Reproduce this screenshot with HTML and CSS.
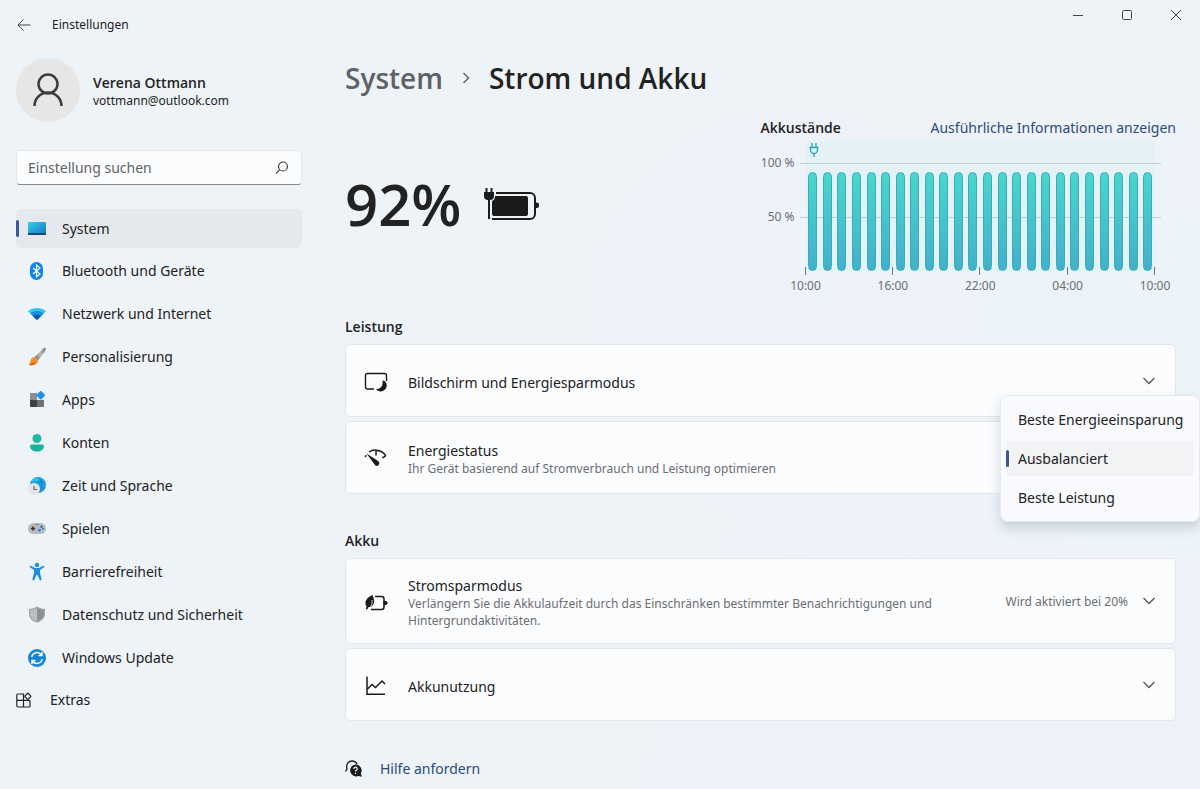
FILE: index.html
```html
<!DOCTYPE html>
<html lang="de">
<head>
  <meta charset="UTF-8" />
  <meta name="viewport" content="width=device-width, initial-scale=1.0"/>
  <title>Einstellungen</title>
  <link rel="stylesheet" href="styles.css">
</head>
<body>

  <header class="titlebar">
    <button class="back" aria-label="Zurück">
      <svg width="14" height="14" viewBox="0 0 14 14"><path d="M13.500 7H1M6.500 1.500L1 7l5.500 5.500"/></svg>
    </button>
    <span class="app-name">Einstellungen</span>
    <div class="window-controls">
      <button aria-label="Minimieren"><svg width="12" height="12" viewBox="0 0 12 12"><path d="M1 6.500h10"/></svg></button>
      <button aria-label="Maximieren"><svg width="12" height="12" viewBox="0 0 12 12"><rect x="1.500" y="1.500" width="9" height="9" rx="1"/></svg></button>
      <button aria-label="Schließen"><svg width="12" height="12" viewBox="0 0 12 12"><path d="M1 1l10 10M11 1L1 11"/></svg></button>
    </div>
  </header>

  <div class="layout">
    <aside class="sidebar">
      <div class="profile">
        <div class="avatar">
          <svg width="30" height="34" viewBox="0 0 30 34"><circle cx="15" cy="11" r="9.500"/><path d="M1.500 33a13.500 13.500 0 0 1 27 0"/></svg>
        </div>
        <div class="user">
          <div class="name">Verena Ottmann</div>
          <div class="mail">vottmann@outlook.com</div>
        </div>
      </div>

      <form class="search">
        <input type="search" placeholder="Einstellung suchen" aria-label="Einstellung suchen">
        <svg width="14" height="14" viewBox="0 0 14 14"><circle cx="8" cy="5.500" r="4.500"/><path d="M4.800 8.700L1 12.500"/></svg>
      </form>

      <nav class="nav">
        <a class="nav-item active" href="#">
          <svg width="20" height="20" viewBox="0 0 20 20">
            <defs><linearGradient id="sys" x1="0" y1="0" x2="1" y2="1"><stop offset="0" stop-color="#38d0e4"/><stop offset="1" stop-color="#1374c8"/></linearGradient></defs>
            <rect x="1" y="3" width="18" height="13" rx="1" fill="url(#sys)"/><path d="M1 14h18v1a1 1 0 0 1-1 1H2a1 1 0 0 1-1-1z" fill="#0d4a7c"/>
          </svg>
          System
        </a>
        <a class="nav-item" href="#">
          <svg width="20" height="20" viewBox="0 0 20 20">
            <rect x="3" y="1" width="13" height="18" rx="6.500" fill="#0a84f5"/><path d="M6 7l7 6-3.500 3V4L13 7l-7 6" fill="none" stroke="#fff" stroke-width="1.200"/>
          </svg>
          Bluetooth und Geräte
        </a>
        <a class="nav-item" href="#">
          <svg width="20" height="20" viewBox="0 0 20 20">
            <path d="M1 7.200C6 2.800 14 2.800 19 7.200L10 16z" fill="#38c3f0"/><path d="M3.300 9.400c4-3.200 9.400-3.200 13.400 0L10 16z" fill="#1690dc"/><path d="M5.800 11.900c2.600-2 5.800-2 8.400 0L10 16z" fill="#0b5cad"/>
          </svg>
          Netzwerk und Internet
        </a>
        <a class="nav-item" href="#">
          <svg width="20" height="20" viewBox="0 0 20 20">
            <defs><linearGradient id="brush" x1="1" y1="0" x2="0" y2="1"><stop offset="0" stop-color="#777"/><stop offset=".5" stop-color="#bbb"/><stop offset="1" stop-color="#666"/></linearGradient></defs>
            <path d="M18.500 1.200c.8.800.2 2-.6 3.200l-7 9.100-3.600-3.300 8.200-8c1-1 2.200-1.800 3-1z" fill="url(#brush)"/><path d="M7 10l4 3.700c-.3 3.300-4 5.300-9.500 4.300 1.700-1 1.500-2.300 2-4.200C4 12 5 10.500 7 10z" fill="#f58a1f"/><path d="M2 18.100c3 .4 5-.2 6.500-1.800-2-.2-3.500-.5-5 .4z" fill="#dd5a0c"/>
          </svg>
          Personalisierung
        </a>
        <a class="nav-item" href="#">
          <svg width="20" height="20" viewBox="0 0 20 20">
            <path d="M3 3h7v7H3z" fill="#8b8d92"/><path d="M3 10h7v7H4a1 1 0 0 1-1-1z" fill="#3e4044"/><path d="M10 10h7v6a1 1 0 0 1-1 1h-6z" fill="#6e7075"/><rect x="10.500" y="2" width="6.500" height="6.500" rx="1" transform="rotate(45 13.750 5.250)" fill="#1e90ea"/>
          </svg>
          Apps
        </a>
        <a class="nav-item" href="#">
          <svg width="20" height="20" viewBox="0 0 20 20">
            <circle cx="10" cy="5.500" r="4.500" fill="#20b8a6"/><path d="M4.500 11.500h11A1.500 1.500 0 0 1 17 13c0 3.500-3 5.500-7 5.500S3 16.500 3 13a1.500 1.500 0 0 1 1.500-1.500z" fill="#19b39d"/>
          </svg>
          Konten
        </a>
        <a class="nav-item" href="#">
          <svg width="20" height="20" viewBox="0 0 20 20">
            <circle cx="11" cy="9" r="8" fill="#1d9fdf"/><path d="M4 5.500C6 2 10 .5 13 1.400L10 6l-3 1z" fill="#38c8ec"/><path d="M4 6h14.500M3.500 12H18M11 1c-5 5-5 11 0 16M11 1c5 5 5 11 0 16" fill="none" stroke="#0d6fbc" stroke-width=".5"/><circle cx="7" cy="13" r="6" fill="#e4e4e6"/><path d="M7 9.800V13.500h3" fill="none" stroke="#666" stroke-width="1.200"/>
          </svg>
          Zeit und Sprache
        </a>
        <a class="nav-item" href="#">
          <svg width="20" height="20" viewBox="0 0 20 20">
            <rect x="1" y="4" width="18" height="11" rx="5.500" fill="#b9bbc0"/><path d="M3.800 9.500h4.400M6 7.300v4.400" stroke="#333" stroke-width="1.400"/><path d="M8.500 5.500h3" stroke="#777"/><circle cx="14.500" cy="7.800" r="1.300" fill="#1583d5"/><circle cx="12.500" cy="11.300" r="1.300" fill="#1583d5"/><circle cx="16" cy="9.700" r="1" fill="#1583d5"/>
          </svg>
          Spielen
        </a>
        <a class="nav-item" href="#">
          <svg width="20" height="20" viewBox="0 0 20 20">
            <circle cx="10" cy="3" r="2.200" fill="#1b8fe2"/><path d="M3.800 3.800L8 6h4l4.200-2.200c1-.3 1.500 1 .6 1.600L13 8v3l1.600 6.300c.1 1.200-1.400 1.500-1.900.5L10.500 13h-1l-2.200 4.800c-.5 1-2 .7-1.900-.5L7 11V8L3.200 5.400c-.9-.6-.4-1.900.6-1.600z" fill="#1b8fe2"/>
          </svg>
          Barrierefreiheit
        </a>
        <a class="nav-item" href="#">
          <svg width="20" height="20" viewBox="0 0 20 20">
            <path d="M10 1.500c2.500 1.700 5 2.200 8 2.500v5c0 4-3 6.800-8 8.800-5-2-8-4.800-8-8.800V4c3-.3 5.500-.8 8-2.500z" fill="#a3a5a8"/><path d="M10 3v13.200c4-1.800 6.700-4 6.700-7.200V5.200C14.200 5 12 4.300 10 3z" fill="#8d8f92"/><path d="M10 3v13.200C6 14.400 3.300 12.200 3.300 9V5.200C5.800 5 8 4.300 10 3z" fill="#bcbec0"/>
          </svg>
          Datenschutz und Sicherheit
        </a>
        <a class="nav-item" href="#">
          <svg width="20" height="20" viewBox="0 0 20 20">
            <circle cx="10" cy="10" r="9" fill="#1486d8"/><path d="M4.800 9a5.300 5.300 0 0 1 9.700-2M15.200 11a5.300 5.300 0 0 1-9.700 2M15 4v3.500h-3.500M5 16v-3.500h3.500" fill="none" stroke="#fff" stroke-width="1.500"/>
          </svg>
          Windows Update
        </a>
        <a class="nav-item extra" href="#">
          <svg width="16" height="16" viewBox="0 0 16 16">
            <path d="M8 2H2A1.300 1.300 0 0 0 .8 3.300v10.400A1.300 1.300 0 0 0 2 15h10.700a1.300 1.300 0 0 0 1.300-1.300V8.500M7.500 2v13M.8 8.300H14" fill="none" stroke="#222" stroke-width="1.200"/><rect x="9.500" y="2" width="4.600" height="4.600" rx=".6" transform="rotate(45 11.800 4.300)" fill="none" stroke="#222" stroke-width="1.200"/>
          </svg>
          Extras
        </a>
      </nav>
    </aside>

    <main class="content">
      <h1 class="breadcrumb">
        <a href="#">System</a>
        <svg width="8" height="12" viewBox="0 0 8 12"><path d="M1.500 1l5 5-5 5"/></svg>
        <span>Strom und Akku</span>
      </h1>

      <section class="overview">
        <div class="level">
          <span>92%</span>
          <svg width="56" height="34" viewBox="0 0 56 34">
            <path d="M12 6h34a5 5 0 0 1 5 5v16a5 5 0 0 1-5 5H8" fill="none" stroke="#1b1b1b" stroke-width="2"/>
            <path d="M11 9h31a2 2 0 0 1 2 2v16a2 2 0 0 1-2 2H10a2 2 0 0 1-2-2V14q3-1 3-5z" fill="#1b1b1b"/>
            <path d="M51 15.500h2a2 2 0 0 1 2 2v1.500a2 2 0 0 1-2 2h-2z" fill="#1b1b1b"/>
            <path d="M0 5h10v4a4 4 0 0 1-4 4H4a4 4 0 0 1-4-4z" fill="#1b1b1b"/>
            <path d="M2.500 1v5M7.500 1v5M5 12v20" fill="none" stroke="#1b1b1b" stroke-width="2"/>
          </svg>
        </div>

        <div class="chart">
          <div class="chart-head">
            <h2>Akkustände</h2>
            <a href="#">Ausführliche Informationen anzeigen</a>
          </div>
          <div class="chart-body">
            <div class="y-axis"><span>100 %</span><span>50 %</span></div>
            <div class="plot">
              <svg class="plug" width="10" height="14" viewBox="0 0 10 14"><path d="M3 0v4M7 0v4M.5 4.500h9M1.500 4.500V7a3.500 3.500 0 0 0 7 0V4.500M5 10.500V14"/></svg>
              <div class="bars" id="bars"></div>
            </div>
          </div>
          <div class="x-axis"><span>10:00</span><span>16:00</span><span>22:00</span><span>04:00</span><span>10:00</span></div>
        </div>
      </section>

      <section class="group">
        <h2>Leistung</h2>
        <button class="card">
          <svg class="icon" width="24" height="24" viewBox="0 0 24 24"><path d="M10 19H3.500a2 2 0 0 1-2-2V5.500a2 2 0 0 1 2-2h17a2 2 0 0 1 2 2V11" fill="none" stroke="#1b1b1b" stroke-width="1.400"/><path d="M18.500 10.500c4.500.5 5 5 3.500 7.800-2 3.700-7.200 4.200-10 1 4.800-.3 7.300-3.600 6.500-8.800z" fill="#1b1b1b"/></svg>
          <span class="text"><span class="title">Bildschirm und Energiesparmodus</span></span>
          <svg class="chevron" width="14" height="8" viewBox="0 0 14 8"><path d="M1.500 1L7 6.500 12.500 1"/></svg>
        </button>
        <div class="card">
          <svg class="icon" width="24" height="24" viewBox="0 0 24 24"><path d="M5 5C10 1.500 18.500 3 21.800 9M12 3.500v5M21.800 8.800l-3.500 2M2.300 8.300l-1.200 1.600" fill="none" stroke="#1b1b1b" stroke-width="1.500"/><path d="M2.500 6.500l12 7.700a2.700 2.700 0 0 1-3.200 4.300z" fill="#1b1b1b"/></svg>
          <span class="text">
            <span class="title">Energiestatus</span>
            <span class="sub">Ihr Gerät basierend auf Stromverbrauch und Leistung optimieren</span>
          </span>
          <div class="menu" role="listbox" aria-label="Energiestatus">
            <button role="option" aria-selected="false">Beste Energieeinsparung</button>
            <button role="option" aria-selected="true" class="selected">Ausbalanciert</button>
            <button role="option" aria-selected="false">Beste Leistung</button>
          </div>
        </div>
      </section>

      <section class="group">
        <h2>Akku</h2>
        <button class="card tall">
          <svg class="icon" width="24" height="24" viewBox="0 0 24 24"><path d="M11 5.500h6.500a2.500 2.500 0 0 1 2.500 2.500v8a2.500 2.500 0 0 1-2.500 2.500H7" fill="none" stroke="#1b1b1b" stroke-width="1.500"/><path d="M20 10l3 1v2l-3 1z" fill="#1b1b1b" stroke="#1b1b1b"/><path d="M8.500 4c-4 2-7.500 4.500-7 9 .1 1 .4 1.700 1 2.300L1.800 18l1.500.6 1-2.400c4 0 6.500-3.500 5.700-7.500C9.700 7 9 5.500 8.500 4z" fill="#1b1b1b"/><path d="M6.500 15.500c1.500-2 2-4 1.500-6.500" stroke="#fff" stroke-width=".8" fill="none"/></svg>
          <span class="text">
            <span class="title">Stromsparmodus</span>
            <span class="sub">Verlängern Sie die Akkulaufzeit durch das Einschränken bestimmter Benachrichtigungen und Hintergrundaktivitäten.</span>
          </span>
          <span class="value">Wird aktiviert bei 20%</span>
          <svg class="chevron" width="14" height="8" viewBox="0 0 14 8"><path d="M1.500 1L7 6.500 12.500 1"/></svg>
        </button>
        <button class="card">
          <svg class="icon" width="24" height="24" viewBox="0 0 24 24"><path d="M3 2.500v17.700h18M3.500 15L8 10.500l3.500 3L18 7l3 3" fill="none" stroke="#1b1b1b" stroke-width="1.500"/></svg>
          <span class="text"><span class="title">Akkunutzung</span></span>
          <svg class="chevron" width="14" height="8" viewBox="0 0 14 8"><path d="M1.500 1L7 6.500 12.500 1"/></svg>
        </button>
      </section>

      <a class="help" href="#">
        <svg width="18" height="18" viewBox="0 0 18 18"><path d="M.5 11.500l1.500-2.500C.8 4.500 3 1 6.800 1c2.600 0 4.500 1.300 5.300 3.200" fill="none" stroke="#1b1b1b" stroke-width="1.300"/><path d="M10.500 4.500a6 6 0 0 1 5.300 9l1.200 3.300-3.500-.8a6 6 0 1 1-3-11.500z" fill="#1b1b1b"/><path d="M8.800 9a1.700 1.700 0 1 1 2.600 1.300c-.6.400-.9.600-.9 1.300M10.500 12.700v1.300" fill="none" stroke="#fff" stroke-width="1.200"/></svg>
        Hilfe anfordern
      </a>
    </main>
  </div>

  <script>
    // battery level in percent, one value per hour
    const levels = new Array(24).fill(92);
    const bars = document.getElementById('bars');

    levels.forEach(level => {
      const bar = document.createElement('span');
      bar.style.height = level + '%';
      bars.appendChild(bar);
    });
  </script>

</body>
</html>
```
FILE: styles.css
```css
*, *::before {
  box-sizing: border-box;
}

body {
  margin: 0;
  min-height: 100vh;
  font-family: "Noto Sans", "Open Sans", sans-serif;
  font-size: 14px;
  line-height: 20px;
  color: #222;
  background:
    radial-gradient(circle at 66% 40%, #eef2fa 0, rgba(238, 242, 250, 0) 24%),
    radial-gradient(circle at 90% 100%, #eef2fa 0, rgba(238, 242, 250, 0) 35%),
    radial-gradient(circle at 96% 60%, #ebf4f8 0, rgba(235, 244, 248, 0) 30%),
    #eef3f8;
}

h1, h2 {
  margin: 0;
}

a {
  color: #2c4a7c;
  text-decoration: none;
}

button {
  font: inherit;
  color: inherit;
  border: none;
  background: none;
  padding: 0;
}

svg {
  flex: none;
}

/* title bar */
.titlebar {
  display: flex;
  align-items: center;
  height: 50px;
  padding-left: 16px;
  font-size: 12px;
}

.back {
  display: flex;
  justify-content: center;
  width: 16px;
}

.back svg, .window-controls svg {
  fill: none;
  stroke: #444;
}

.app-name {
  margin-left: 20px;
}

.window-controls {
  display: flex;
  align-self: flex-start;
  margin-left: auto;
}

.window-controls button {
  display: flex;
  align-items: center;
  justify-content: center;
  width: 49px;
  height: 30px;
}

.layout {
  display: flex;
  padding: 8px 24px 0 16px;
}

/* sidebar */
.sidebar {
  flex: none;
  width: 286px;
  margin-right: 43px;
}

.profile {
  display: flex;
  align-items: center;
  gap: 13px;
}

.avatar {
  display: flex;
  align-items: center;
  justify-content: center;
  width: 64px;
  height: 64px;
  border-radius: 50%;
  background: #e6e6e6;
}

.avatar svg {
  fill: none;
  stroke: #3c3c3c;
  stroke-width: 2.5;
}

.user {
  padding-top: 4px;
}

.name {
  font-family: "Open Sans", sans-serif;
  font-weight: 600;
  line-height: 18px;
}

.mail {
  font-size: 12px;
  line-height: 18px;
}

.search {
  display: flex;
  align-items: center;
  height: 35px;
  margin: 28px 0 24px;
  padding: 0 12px 0 11px;
  border: 1px solid #e2e6ea;
  border-bottom-color: #868a8e;
  border-radius: 4px;
  background: #fbfcfe;
}

.search input {
  flex: 1;
  min-width: 0;
  padding: 0;
  border: none;
  outline: none;
  background: none;
  font: inherit;
}

.search input::placeholder {
  color: #5f6265;
}

.search svg {
  fill: none;
  stroke: #444;
  stroke-width: 1.2;
}

.nav {
  display: flex;
  flex-direction: column;
  justify-content: space-between;
  height: 511px;
}

.nav-item {
  display: flex;
  align-items: center;
  gap: 15px;
  height: 39px;
  padding-left: 11px;
  border-radius: 5px;
  color: #222;
}

.nav-item.active {
  position: relative;
  background: #e5e8ed;
}

.nav-item.active::before, .menu .selected::before {
  content: "";
  position: absolute;
  left: 0;
  width: 3px;
  height: 17px;
  border-radius: 2px;
  background: #3a5a8f;
}

.nav-item.extra {
  gap: 18px;
  padding-left: 0;
}

/* content */
.content {
  flex: 1;
  min-width: 0;
}

.breadcrumb {
  display: flex;
  align-items: center;
  gap: 19px;
  font-family: "Open Sans", sans-serif;
  font-size: 28px;
  font-weight: 600;
  line-height: 40px;
}

.breadcrumb a {
  color: #5f6265;
}

.breadcrumb svg {
  fill: none;
  stroke: #5f6265;
  stroke-width: 1.5;
}

.overview {
  display: flex;
  justify-content: space-between;
  margin-top: 20px;
}

.level {
  display: flex;
  align-items: center;
  gap: 23px;
  height: 172px;
  font-family: "Open Sans", sans-serif;
  font-size: 58px;
  font-weight: 600;
}

/* chart */
.chart {
  width: 50%;
}

.chart-head {
  display: flex;
  justify-content: space-between;
}

h2 {
  font-family: "Open Sans", sans-serif;
  font-size: 14px;
  font-weight: 600;
}

.chart-body {
  display: flex;
  height: 130px;
  margin: 3px 21px 0 0;
}

.y-axis {
  display: flex;
  flex-direction: column;
  gap: 34px;
  width: 45px;
  padding: 12px 11px 0 0;
  font-size: 12px;
  text-align: right;
  white-space: nowrap;
  color: #6b6e71;
}

.plot {
  position: relative;
  flex: 1;
  padding-top: 22px;
  background: #e4f1f5;
}

/* grid lines at 100 % and 50 % */
.plot::before {
  content: "";
  position: absolute;
  top: 22px;
  left: -6px;
  right: -6px;
  height: 55px;
  border-top: 1px solid #c3ccd0;
  border-bottom: 1px solid #c3ccd0;
}

.plug {
  position: absolute;
  top: 2px;
  left: 3px;
  fill: none;
  stroke: #2aa3b0;
  stroke-width: 1.3;
}

.bars {
  position: relative;
  display: flex;
  align-items: flex-end;
  justify-content: space-around;
  height: 100%;
}

.bars span {
  width: 9px;
  border: 1px solid #35aebb;
  border-radius: 5px;
  background: linear-gradient(#4ad6cc, #43b0ca);
}

.x-axis {
  display: flex;
  justify-content: space-between;
  margin: 0 1px 0 25px;
  font-size: 12px;
  color: #6b6e71;
}

.x-axis span {
  position: relative;
  width: 40px;
  padding-top: 5px;
  text-align: center;
}

.x-axis span::before {
  content: "";
  position: absolute;
  top: -4px;
  left: 19px;
  width: 1px;
  height: 8px;
  background: #707376;
}

/* setting cards */
.group {
  display: flex;
  flex-direction: column;
  gap: 4px;
  margin-top: 21px;
}

.group + .group {
  margin-top: 37px;
}

.group h2 {
  margin-bottom: 3px;
}

.card {
  position: relative;
  display: flex;
  align-items: center;
  min-height: 73px;
  padding: 0 19px 0 18px;
  border: 1px solid #e3e7ec;
  border-radius: 5px;
  background: #fbfcfe;
  text-align: left;
}

.card.tall {
  min-height: 86px;
}

.icon {
  margin: 3px 20px 0 0;
}

.text {
  flex: 1;
  display: flex;
  flex-direction: column;
  padding-top: 4px;
}

.title {
  line-height: 18px;
}

.sub, .value {
  font-size: 12px;
  line-height: 17px;
  color: #6b6e71;
}

.sub {
  max-width: 550px;
}

.chevron {
  margin-left: 14px;
  fill: none;
  stroke: #555;
  stroke-width: 1.3;
}

.menu {
  position: absolute;
  top: -27px;
  right: -25px;
  z-index: 1;
  display: flex;
  flex-direction: column;
  gap: 4px;
  width: 200px;
  padding: 6px 5px;
  border: 1px solid #e6eaee;
  border-radius: 8px;
  background: #f8fafd;
  box-shadow: 0 6px 12px rgba(60, 70, 90, .2);
}

.menu button {
  position: relative;
  display: flex;
  align-items: center;
  height: 35px;
  padding-left: 12px;
  border-radius: 4px;
  white-space: nowrap;
}

.menu .selected {
  background: #f1f3f5;
}

.help {
  display: inline-flex;
  align-items: center;
  gap: 17px;
  margin-top: 38px;
}
```
